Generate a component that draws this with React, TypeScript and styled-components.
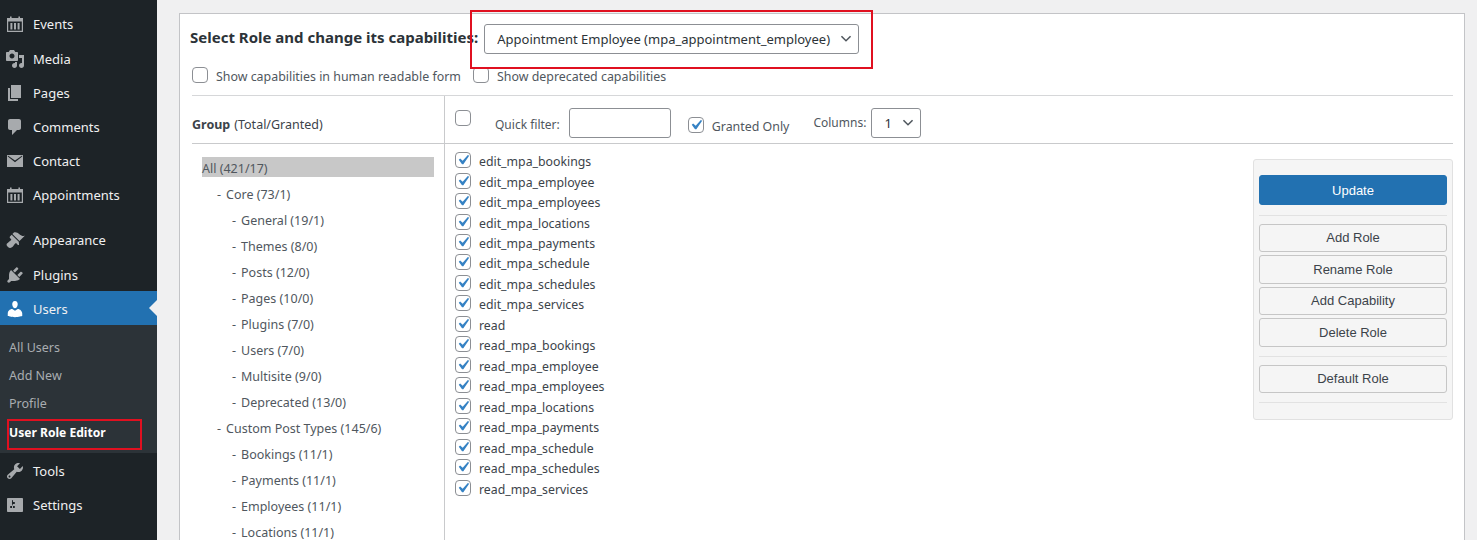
import React from "react";
import styled, { createGlobalStyle } from "styled-components";

const GlobalStyle = createGlobalStyle`
  html, body { margin: 0; padding: 0; height: 540px; overflow: hidden; background: #f0f0f1; }
  body { font-family: "Noto Sans", "Open Sans", sans-serif; font-size: 12.5px; color: #3c434a; }
  * { box-sizing: border-box; }
`;

const Page = styled.div`
  position: relative;
  display: flex;
  width: 1477px;
  height: 540px;
  overflow: hidden;
`;

const Sidebar = styled.nav`
  flex: 0 0 157px;
  height: 540px;
  padding-top: 7px;
  background: #1d2327;
`;

const MenuItem = styled.div<{ $active?: boolean; $gap?: boolean }>`
  position: relative;
  display: flex;
  align-items: center;
  height: ${(p) => (p.$active ? "34px" : "34.2px")};
  margin-top: ${(p) => (p.$gap ? "10.89px" : "0")};
  padding: 0.45px 0 0 5px;
  gap: 8px;
  font-size: 13px;
  color: #f0f0f1;
  background: ${(p) => (p.$active ? "#2271b1" : "transparent")};

  svg { flex: none; fill: ${(p) => (p.$active ? "#fff" : "#a7aaad")}; }

  ${(p) =>
    p.$active &&
    `&::after {
      content: "";
      position: absolute;
      right: 0;
      top: 9px;
      border: 8px solid transparent;
      border-right-color: #f0f0f1;
      border-left-width: 0;
    }`}
`;

const SubMenu = styled.div`
  height: 128px;
  padding-top: 8.8px;
  background: #2c3338;
`;

const SubItem = styled.div<{ $current?: boolean }>`
  height: 28.1px;
  padding-left: 9px;
  line-height: ${(p) => (p.$current ? 30 : 28)}px;
  font-size: ${(p) => (p.$current ? 12.1 : 12.5)}px;
  font-weight: ${(p) => (p.$current ? 700 : 400)};
  color: ${(p) => (p.$current ? "#fff" : "#a9adb1")};
`;

const Content = styled.main`
  flex: 1;
  padding: 13px 12px 0 22px;
`;

const Card = styled.section`
  height: 600px;
  padding: 0 11px 0 12px;
  background: #fff;
  border: 1px solid #c3c4c7;
`;

const RoleRow = styled.div`
  display: flex;
  align-items: center;
  gap: 6px;
  height: 39px;
  padding-top: 11px;
  margin-left: -2px;
`;

const RoleTitle = styled.h2`
  margin: 0;
  font-size: 15px;
  font-weight: 700;
  color: #2c3338;
  position: relative;
  top: -2px;
`;

const chevron = `url("data:image/svg+xml,%3Csvg xmlns='http://www.w3.org/2000/svg' viewBox='0 0 20 20'%3E%3Cpath d='M5 6l5 5 5-5 1.4 1.2L10 13.4 3.6 7.2z' fill='%2350575e'/%3E%3C/svg%3E")`;

const Select = styled.select<{ $width: number; $height: number }>`
  appearance: none;
  width: ${(p) => p.$width}px;
  height: ${(p) => p.$height}px;
  padding: 0 24px 0 12px;
  font: inherit;
  font-size: 13px;
  color: #2c3338;
  background: #fff ${chevron} no-repeat right 4px center / 16px 16px;
  border: 1px solid #8c8f94;
  border-radius: 3px;
`;

const OptionsRow = styled.div`
  display: flex;
  align-items: center;
  height: 34px;
  padding-top: 12px;
`;

const Check = styled.input.attrs({ type: "checkbox", readOnly: true })`
  appearance: none;
  flex: none;
  width: 16px;
  height: 16px;
  margin: 0 0 3px;
  background: #fff center / 20px 20px no-repeat;
  border: 1px solid #8c8f94;
  border-radius: 4px;

  &:checked {
    background-image: url("data:image/svg+xml,%3Csvg xmlns='http://www.w3.org/2000/svg' viewBox='0 0 20 20'%3E%3Cpath d='M14.83 4.89l1.34.94-5.81 8.38H9.02L5.78 9.67l1.34-1.25 2.57 2.4z' fill='%233582c4'/%3E%3C/svg%3E");
  }
`;

const CheckLabel = styled.label<{ $width?: number; $left?: number; $drop?: number }>`
  display: inline-flex;
  align-items: center;
  gap: 8px;
  width: ${(p) => (p.$width ? `${p.$width}px` : "auto")};
  margin: ${(p) => p.$drop ?? 0}px 0 0 ${(p) => p.$left ?? 0}px;
  font-size: 12.4px;
  color: #50575e;
`;

const Rule = styled.hr`
  margin: 8px 0 0;
  border: 0;
  border-top: 1px solid #d6d7d9;
`;

const Editor = styled.div`
  display: grid;
  grid-template-columns: 252px 1fr;
  grid-template-rows: 48px auto;
`;

const GroupHead = styled.div`
  display: flex;
  align-items: center;
  padding-top: 10px;
  font-size: 12.5px;
  border-bottom: 1px solid #c9cacc;

  b { color: #3c434a; margin-right: 4px; }
`;

const Toolbar = styled.div`
  position: relative;
  display: flex;
  align-items: center;
  height: 48px;
  padding: 7px 0 0 10px;
  border-left: 1px solid #c9cacc;
  border-bottom: 1px solid #c9cacc;
`;

const FilterLabel = styled.span<{ $left: number; $raise?: number }>`
  margin-left: ${(p) => p.$left}px;
  font-size: 12px;
  color: #50575e;
  transform: translateY(${(p) => p.$raise ?? 0}px);
`;

const RaisedCheck = styled(Check)`
  align-self: flex-start;
  margin: 7px 0 0;
`;

const FilterInput = styled.input.attrs({ readOnly: true })`
  width: 102px;
  height: 30px;
  margin-left: 9px;
  background: #fff;
  border: 1px solid #8c8f94;
  border-radius: 3px;
`;

const ColumnsSelect = styled(Select)`
  margin-left: 5px;
`;

const Tree = styled.ul`
  margin: 0;
  padding: 13px 10px 0 10px;
  list-style: none;
`;

const TreeItem = styled.li<{ $depth: number; $selected?: boolean }>`
  height: 20px;
  margin-bottom: 6px;
  padding-left: ${(p) => p.$depth * 15}px;
  line-height: 24px;
  color: #50575e;
  background: ${(p) => (p.$selected ? "#c8c8c8" : "transparent")};
`;

const TreeDash = styled.span`
  margin-right: 5px;
`;

const Body = styled.div`
  display: flex;
  justify-content: space-between;
  align-items: flex-start;
  height: 420px;
  padding: 7.4px 0 0 10px;
  border-left: 1px solid #c9cacc;
`;

const CapList = styled.div`
  display: flex;
  flex-direction: column;
`;

const CapRow = styled.label`
  display: flex;
  align-items: center;
  gap: 8px;
  height: 20.47px;
  font-size: 12.3px;
  color: #3c434a;
`;

const Actions = styled.aside`
  display: flex;
  flex-direction: column;
  width: 200px;
  height: 261px;
  margin: 7.6px 0 0 0;
  padding: 15px 5px 0;
  font-family: "Liberation Sans", Arial, sans-serif;
  background: #f5f5f5;
  border: 1px solid #e1e1e1;
  border-radius: 3px;
`;

const ActionButton = styled.button<{ $primary?: boolean }>`
  flex: none;
  width: 100%;
  height: ${(p) => (p.$primary ? 30 : 28.5)}px;
  margin-bottom: ${(p) => (p.$primary ? 0 : 3)}px;
  padding: ${(p) => (p.$primary ? "1px 0 0" : "0 0 1px")};
  font: inherit;
  font-size: 13px;
  color: ${(p) => (p.$primary ? "#fff" : "#3c434a")};
  background: ${(p) => (p.$primary ? "#2271b1" : "#f5f5f5")};
  border: 1px solid ${(p) => (p.$primary ? "#2271b1" : "#c6c6c6")};
  border-radius: 3px;
`;

const ActionRule = styled.hr<{ $before: number; $after: number }>`
  flex: none;
  width: 100%;
  margin: ${(p) => p.$before}px 0 ${(p) => p.$after}px;
  border: 0;
  border-top: 1px solid #e2e2e2;
`;

const Callout = styled.div<{ $x: number; $y: number; $w: number; $h: number }>`
  position: absolute;
  left: ${(p) => p.$x}px;
  top: ${(p) => p.$y}px;
  width: ${(p) => p.$w}px;
  height: ${(p) => p.$h}px;
  border: 2px solid #e01020;
  pointer-events: none;
`;

const Icon = ({ d }: { d: string }) => (
  <svg width="20" height="20" viewBox="0 0 20 20" aria-hidden="true">
    <path d={d} fillRule="evenodd" />
  </svg>
);

const icons = {
  calendar:
    "M5 2.5h1.6V4h6.8V2.5H15V4h3v14H2V4h3zM3.2 7.6v9.2h13.6V7.6zM5.4 9h2v6.6h-2zM9 9h2v6.6H9zM12.6 9h2v6.6h-2z",
  media:
    "M13 11V4c0-.55-.45-1-1-1h-1.67L9 1H5L3.67 3H2c-.55 0-1 .45-1 1v7c0 .55.45 1 1 1h10c.55 0 1-.45 1-1zM7 4.5c1.38 0 2.5 1.12 2.5 2.5S8.38 9.5 7 9.5 4.5 8.38 4.5 7 5.62 4.5 7 4.5zM14 6h5v10.5c0 1.38-1.12 2.5-2.5 2.5S14 17.88 14 16.5s1.12-2.5 2.5-2.5c.17 0 .34.02.5.05V9h-3V6zm-4 8.05V13h2v3.5c0 1.38-1.12 2.5-2.5 2.5S7 17.88 7 16.5 8.12 14 9.5 14c.17 0 .34.02.5.05z",
  page: "M6 15V2h10v13H6zm-1 1h8v2H3V5h2v11z",
  comment:
    "M5 2h9c1.1 0 2 .9 2 2v7c0 1.1-.9 2-2 2h-2l-5 5v-5H5c-1.1 0-2-.9-2-2V4c0-1.1.9-2 2-2z",
  email:
    "M2 4h16v12H2zM2.8 5.6l7.2 5.6 7.2-5.6v-1.2L10 9.6 2.8 4.4z",
  brush:
    "M14.48 11.06L7.41 3.99l1.5-1.5c.5-.56 2.3-.47 3.51.32 1.21.8 1.43 1.28 2.91 2.1 1.18.64 2.45 1.26 4.45.85zm-.71.71L6.7 4.7 4.93 6.47c-.39.39-.39 1.02 0 1.41l1.06 1.06c.39.39.39 1.03 0 1.42-.6.6-1.43 1.11-2.21 1.69-.35.26-.7.53-1.01.84C1.43 13.23.91 14.96 2.73 16.8c1.84 1.84 3.58 1.33 4.92-.01.31-.31.58-.66.84-1.01.58-.78 1.09-1.61 1.69-2.21.39-.39 1.03-.39 1.42 0l1.06 1.06c.39.39 1.02.39 1.41 0z",
  plugin:
    "M13.11 4.36L9.87 7.6 8 5.73l3.24-3.24c.35-.34 1.05-.2 1.56.32.52.51.66 1.21.31 1.55zm-8 1.77l.91-1.12 9.01 9.01-1.19.84c-.71.71-2.63 1.16-3.82 1.16H6.14L4.9 17.26c-.59.59-1.54.59-2.12 0-.59-.58-.59-1.53 0-2.12l1.24-1.24v-3.88c0-1.13.4-3.19 1.09-3.89zm7.26 3.97l3.24-3.24c.34-.35 1.04-.21 1.55.31.52.51.66 1.21.31 1.55l-3.24 3.25z",
  user:
    "M10 9.25c-2.27 0-2.73-3.44-2.73-3.44C7 4.02 7.82 2 9.97 2c2.16 0 2.98 2.02 2.71 3.81 0 0-.41 3.44-2.68 3.44zm0 2.57L12.72 10c2.39 0 4.52 2.33 4.52 4.53v2.49s-3.65 1.13-7.24 1.13c-3.65 0-7.24-1.13-7.24-1.13v-2.49c0-2.25 1.94-4.48 4.47-4.48z",
  tools:
    "M16.68 9.77c-1.34 1.34-3.3 1.67-4.95.99l-5.41 6.52c-.99.99-2.59.99-3.58 0s-.99-2.59 0-3.57l6.52-5.42c-.68-1.65-.35-3.61.99-4.95 1.28-1.28 3.12-1.62 4.72-1.06l-2.89 2.89 2.82 2.82 2.86-2.87c.53 1.58.18 3.39-1.08 4.65zM3.81 16.21c.4.39 1.04.39 1.43 0 .4-.4.4-1.04 0-1.43-.39-.4-1.03-.4-1.43 0-.39.39-.39 1.03 0 1.43z",
  settings:
    "M18 16V4c0-.55-.45-1-1-1H3c-.55 0-1 .45-1 1v12c0 .55.45 1 1 1h14c.55 0 1-.45 1-1zM8 11h1c.55 0 1 .45 1 1s-.45 1-1 1H8v1.5c0 .28-.22.5-.5.5s-.5-.22-.5-.5V13H6c-.55 0-1-.45-1-1s.45-1 1-1h1V5.5c0-.28.22-.5.5-.5s.5.22.5.5V7h1c.55 0 1 .45 1 1s-.45 1-1 1h-1v5.5c0 .28-.22.5-.5.5s-.5-.22-.5-.5V9z",
};

const topMenu = [
  ["Events", icons.calendar],
  ["Media", icons.media],
  ["Pages", icons.page],
  ["Comments", icons.comment],
  ["Contact", icons.email],
  ["Appointments", icons.calendar],
];

const groups: [string, number, boolean?][] = [
  ["All (421/17)", 0, true],
  ["Core (73/1)", 1],
  ["General (19/1)", 2],
  ["Themes (8/0)", 2],
  ["Posts (12/0)", 2],
  ["Pages (10/0)", 2],
  ["Plugins (7/0)", 2],
  ["Users (7/0)", 2],
  ["Multisite (9/0)", 2],
  ["Deprecated (13/0)", 2],
  ["Custom Post Types (145/6)", 1],
  ["Bookings (11/1)", 2],
  ["Payments (11/1)", 2],
  ["Employees (11/1)", 2],
  ["Locations (11/1)", 2],
];

const caps = [
  "edit_mpa_bookings",
  "edit_mpa_employee",
  "edit_mpa_employees",
  "edit_mpa_locations",
  "edit_mpa_payments",
  "edit_mpa_schedule",
  "edit_mpa_schedules",
  "edit_mpa_services",
  "read",
  "read_mpa_bookings",
  "read_mpa_employee",
  "read_mpa_employees",
  "read_mpa_locations",
  "read_mpa_payments",
  "read_mpa_schedule",
  "read_mpa_schedules",
  "read_mpa_services",
];

export default function App() {
  return (
    <Page>
      <GlobalStyle />
      <Sidebar>
        {topMenu.map(([label, d]) => (
          <MenuItem key={label}>
            <Icon d={d} />
            {label}
          </MenuItem>
        ))}
        <MenuItem $gap>
          <Icon d={icons.brush} />
          Appearance
        </MenuItem>
        <MenuItem>
          <Icon d={icons.plugin} />
          Plugins
        </MenuItem>
        <MenuItem $active>
          <Icon d={icons.user} />
          Users
        </MenuItem>
        <SubMenu>
          <SubItem>All Users</SubItem>
          <SubItem>Add New</SubItem>
          <SubItem>Profile</SubItem>
          <SubItem $current>User Role Editor</SubItem>
        </SubMenu>
        <MenuItem>
          <Icon d={icons.tools} />
          Tools
        </MenuItem>
        <MenuItem>
          <Icon d={icons.settings} />
          Settings
        </MenuItem>
      </Sidebar>

      <Content>
        <Card>
          <RoleRow>
            <RoleTitle>Select Role and change its capabilities:</RoleTitle>
            <Select $width={375} $height={30} defaultValue="employee">
              <option value="employee">Appointment Employee (mpa_appointment_employee)</option>
            </Select>
          </RoleRow>
          <OptionsRow>
            <CheckLabel $width={281}>
              <Check />
              Show capabilities in human readable form
            </CheckLabel>
            <CheckLabel>
              <Check />
              Show deprecated capabilities
            </CheckLabel>
          </OptionsRow>
          <Rule />
          <Editor>
            <GroupHead>
              <b>Group</b> (Total/Granted)
            </GroupHead>
            <Toolbar>
              <RaisedCheck />
              <FilterLabel $left={24} $raise={1}>Quick filter:</FilterLabel>
              <FilterInput />
              <CheckLabel $left={17} $drop={6}>
                <Check checked />
                Granted Only
              </CheckLabel>
              <FilterLabel $left={24} $raise={-1}>Columns:</FilterLabel>
              <ColumnsSelect $width={50} $height={30} defaultValue="1">
                <option value="1">1</option>
              </ColumnsSelect>
            </Toolbar>
            <Tree>
              {groups.map(([label, depth, selected]) => (
                <TreeItem key={label} $depth={depth} $selected={selected}>
                  {depth > 0 && <TreeDash>-</TreeDash>}
                  {label}
                </TreeItem>
              ))}
            </Tree>
            <Body>
              <CapList>
                {caps.map((cap) => (
                  <CapRow key={cap}>
                    <Check checked />
                    {cap}
                  </CapRow>
                ))}
              </CapList>
              <Actions>
                <ActionButton $primary>Update</ActionButton>
                <ActionRule $before={10} $after={8} />
                <ActionButton>Add Role</ActionButton>
                <ActionButton>Rename Role</ActionButton>
                <ActionButton>Add Capability</ActionButton>
                <ActionButton>Delete Role</ActionButton>
                <ActionRule $before={6} $after={8} />
                <ActionButton>Default Role</ActionButton>
                <ActionRule $before={6} $after={0} />
              </Actions>
            </Body>
          </Editor>
        </Card>
      </Content>

      <Callout $x={470} $y={10} $w={403} $h={59} />
      <Callout $x={7} $y={419} $w={135} $h={31} />
    </Page>
  );
}
